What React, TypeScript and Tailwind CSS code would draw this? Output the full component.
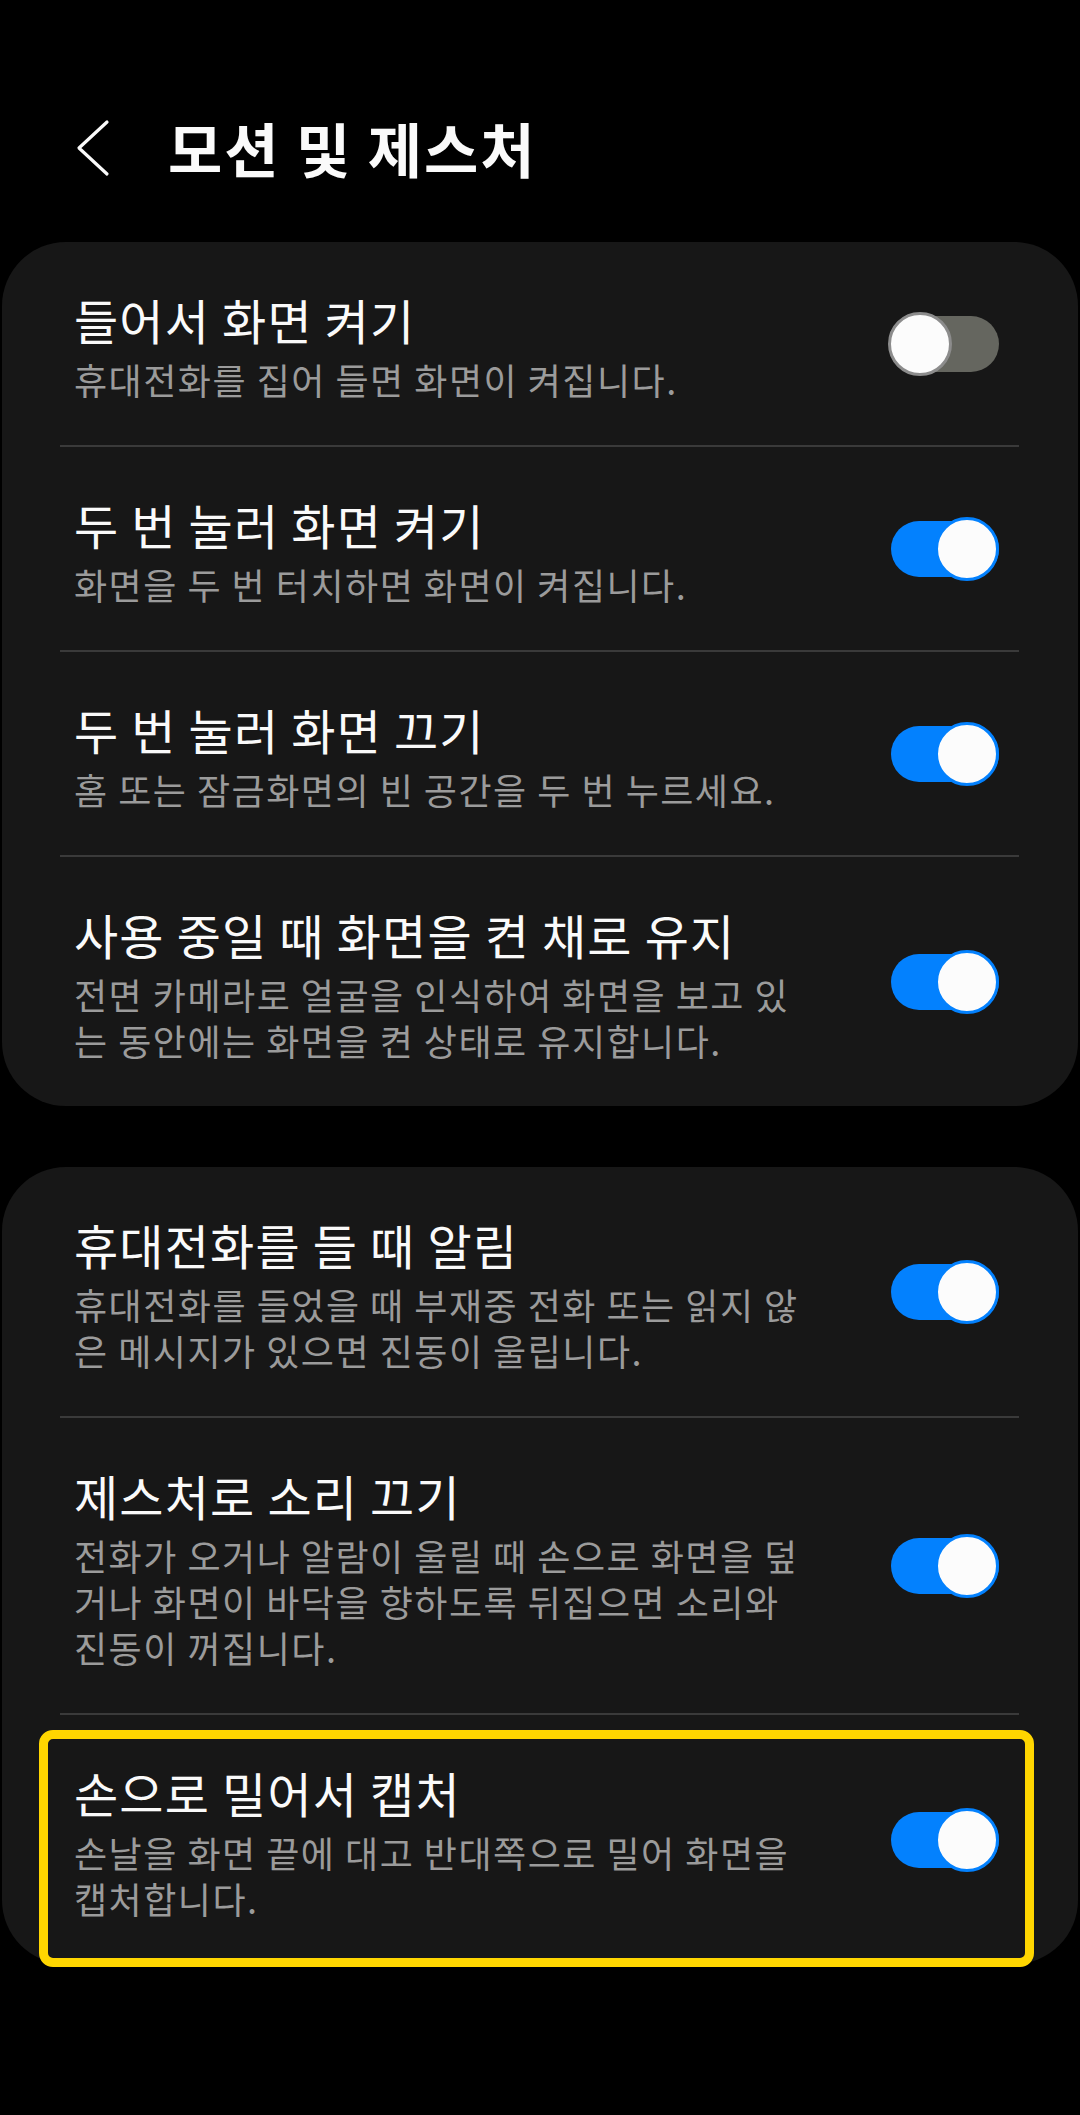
type Setting = {
  title: string;
  lines: string[];
  on: boolean;
  highlight?: boolean;
};

const groupOne: Setting[] = [
  { title: "들어서 화면 켜기", lines: ["휴대전화를 집어 들면 화면이 켜집니다."], on: false },
  { title: "두 번 눌러 화면 켜기", lines: ["화면을 두 번 터치하면 화면이 켜집니다."], on: true },
  { title: "두 번 눌러 화면 끄기", lines: ["홈 또는 잠금화면의 빈 공간을 두 번 누르세요."], on: true },
  {
    title: "사용 중일 때 화면을 켠 채로 유지",
    lines: ["전면 카메라로 얼굴을 인식하여 화면을 보고 있", "는 동안에는 화면을 켠 상태로 유지합니다."],
    on: true,
  },
];

const groupTwo: Setting[] = [
  {
    title: "휴대전화를 들 때 알림",
    lines: ["휴대전화를 들었을 때 부재중 전화 또는 읽지 않", "은 메시지가 있으면 진동이 울립니다."],
    on: true,
  },
  {
    title: "제스처로 소리 끄기",
    lines: [
      "전화가 오거나 알람이 울릴 때 손으로 화면을 덮",
      "거나 화면이 바닥을 향하도록 뒤집으면 소리와",
      "진동이 꺼집니다.",
    ],
    on: true,
  },
  {
    title: "손으로 밀어서 캡처",
    lines: ["손날을 화면 끝에 대고 반대쪽으로 밀어 화면을", "캡처합니다."],
    on: true,
    highlight: true,
  },
];

function Toggle({ on }: { on: boolean }) {
  return (
    <div className="relative mb-[6px] h-[66px] w-[111px] shrink-0">
      <div
        className={`absolute left-[3px] right-0 top-[5px] h-[56px] rounded-full ${on ? "bg-[#0381fe]" : "bg-[#65665f]"}`}
      />
      <div
        className={`absolute top-[1px] h-[64px] w-[64px] rounded-full border-[3px] bg-[#fcfcfc] ${
          on ? "right-0 border-[#0381fe]" : "left-0 border-[#8c8c8c]"
        }`}
      />
    </div>
  );
}

function Row({ item }: { item: Setting }) {
  return (
    <div className="relative flex items-center justify-between pb-[43px] pl-[72px] pr-[79px] pt-[49px]">
      <div className="min-w-0">
        <p className="whitespace-nowrap text-[48px] leading-[56px] tracking-[1.2px] text-[#fafafa]">{item.title}</p>
        <div className="mt-[9px] text-[36px] leading-[46px] tracking-[1.5px] text-[#9b9b9b]">
          {item.lines.map((line) => (
            <p key={line} className="whitespace-nowrap">
              {line}
            </p>
          ))}
        </div>
      </div>
      <Toggle on={item.on} />
      {item.highlight && (
        <div className="pointer-events-none absolute -bottom-[3px] left-[37px] right-[44px] top-[15px] rounded-[14px] border-[9px] border-[#ffd600]" />
      )}
    </div>
  );
}

function Group({ items }: { items: Setting[] }) {
  return (
    <div className="mx-[2px] rounded-[64px] bg-[#171717]">
      {items.map((item, i) => (
        <div key={item.title}>
          {i > 0 && <div className="ml-[58px] mr-[59px] h-[2px] bg-[#3a3a3a]" />}
          <Row item={item} />
        </div>
      ))}
    </div>
  );
}

export default function App() {
  return (
    <div className="min-h-[2115px] w-[1080px] bg-black font-['Noto_Sans_CJK_KR','Noto_Sans',sans-serif]">
      <header className="h-[242px] pt-[112px]">
        <div className="flex h-[72px] items-center">
          <svg
            width="34"
            height="58"
            viewBox="0 0 34 58"
            className="ml-[76px]"
            fill="none"
            stroke="#fafafa"
            strokeWidth="3.2"
            strokeLinecap="round"
            strokeLinejoin="round"
          >
            <polyline points="31,3 3,29 31,55" />
          </svg>
          <h1 className="ml-[58px] text-[59px] font-bold leading-[72px] tracking-[2px] text-[#fafafa]">모션 및 제스처</h1>
        </div>
      </header>

      <Group items={groupOne} />
      <div className="h-[61px]" />
      <Group items={groupTwo} />
    </div>
  );
}
